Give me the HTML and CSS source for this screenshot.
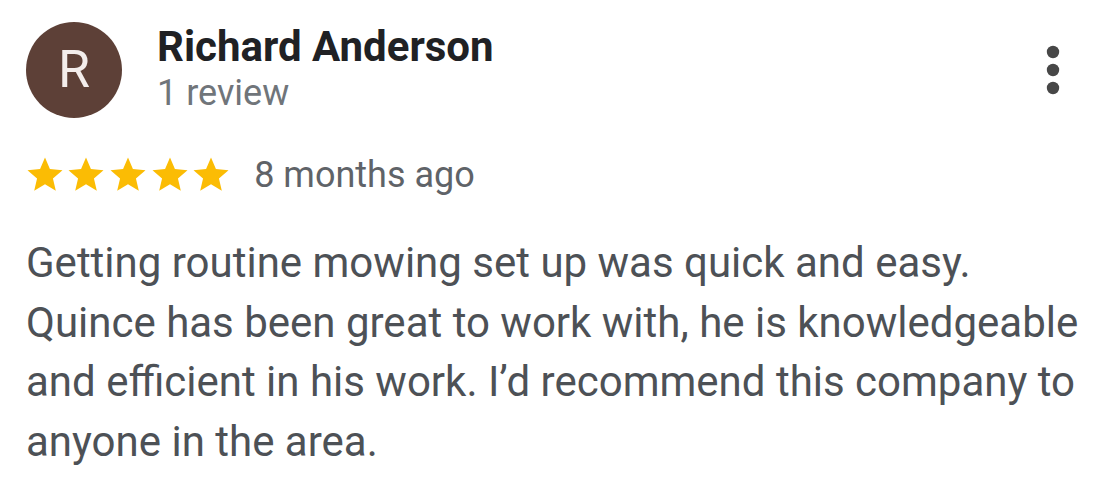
FILE: index.html
```html
<!DOCTYPE html>
<html>
<head>
<meta charset="utf-8">
<link rel="stylesheet" href="styles.css">
</head>
<body>
<div class="review">
  <div class="header">
    <div class="avatar">R</div>
    <div class="who">
      <div class="name">Richard Anderson</div>
      <div class="count">1 review</div>
    </div>
    <div class="more">
      <svg width="14" height="50" viewBox="0 0 14 50"><circle cx="7" cy="7" r="6.2" fill="#474747"/><circle cx="7" cy="25" r="6.2" fill="#474747"/><circle cx="7" cy="43" r="6.2" fill="#474747"/></svg>
    </div>
  </div>
  <div class="meta">
    <div class="stars">
      <svg viewBox="0 0 24 24" class="star"><path d="M12 17.27L18.18 21l-1.64-7.03L22 9.24l-7.19-.61L12 2 9.19 8.63 2 9.24l5.46 4.73L5.82 21z"/></svg>
      <svg viewBox="0 0 24 24" class="star"><path d="M12 17.27L18.18 21l-1.64-7.03L22 9.24l-7.19-.61L12 2 9.19 8.63 2 9.24l5.46 4.73L5.82 21z"/></svg>
      <svg viewBox="0 0 24 24" class="star"><path d="M12 17.27L18.18 21l-1.64-7.03L22 9.24l-7.19-.61L12 2 9.19 8.63 2 9.24l5.46 4.73L5.82 21z"/></svg>
      <svg viewBox="0 0 24 24" class="star"><path d="M12 17.27L18.18 21l-1.64-7.03L22 9.24l-7.19-.61L12 2 9.19 8.63 2 9.24l5.46 4.73L5.82 21z"/></svg>
      <svg viewBox="0 0 24 24" class="star"><path d="M12 17.27L18.18 21l-1.64-7.03L22 9.24l-7.19-.61L12 2 9.19 8.63 2 9.24l5.46 4.73L5.82 21z"/></svg>
    </div>
    <span class="date">8 months ago</span>
  </div>
  <p class="text">Getting routine mowing set up was quick and easy. Quince has been great to work with, he is knowledgeable and efficient in his work. I’d recommend this company to anyone in the area.</p>
</div>
</body>
</html>
```
FILE: styles.css
```css
html, body { margin: 0; padding: 0; background: #fff; }
body { font-family: Roboto, "Noto Sans", sans-serif; }
.review { padding: 22px 0 0 26px; width: 1079px; }
.header { display: flex; align-items: flex-start; }
.avatar {
  width: 96px; height: 96px; border-radius: 50%; flex: none;
  background: #5d4037; color: #f3edeb;
  display: flex; align-items: center; justify-content: center;
  font-size: 52px; line-height: 1;
}
.who { margin-left: 35px; margin-top: 1px; flex: 1; }
.name { font-size: 42px; font-weight: 700; color: #202124; line-height: 48px; }
.count { font-size: 36px; color: #70757a; line-height: 44px; }
.more { padding-top: 23px; padding-right: 45px; }
.more svg { display: block; }
.meta { display: flex; align-items: center; margin-top: 35px; height: 44px; }
.stars { display: flex; margin-left: -2.5px; }
.star { width: 42px; height: 42px; fill: #fbbc04; margin-right: -0.33px; display: block; }
.star:last-child { margin-right: 0; }
.date { font-size: 36px; line-height: 44px; color: #5f6368; margin-left: 22px; }
.text { font-size: 42px; line-height: 59.5px; color: #4d5156; margin: 36px 0 0; }
```
